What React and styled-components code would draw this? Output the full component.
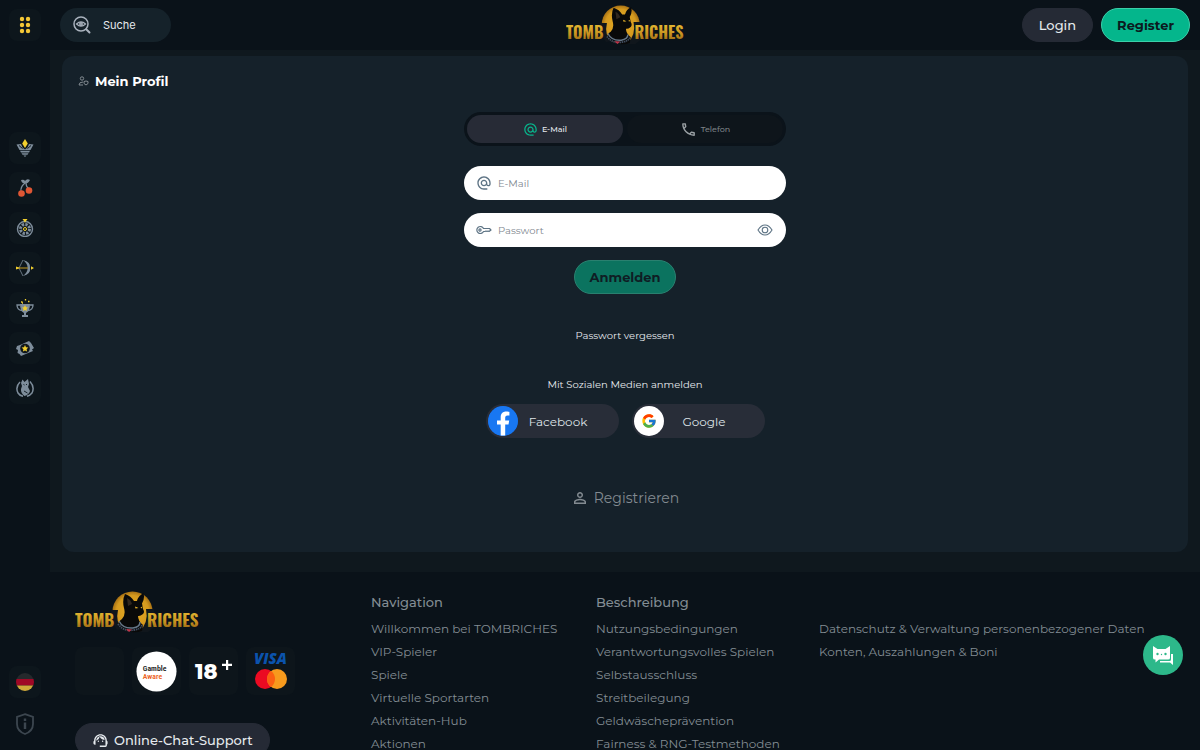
import React from "react";
import styled, { createGlobalStyle } from "styled-components";
import { MdAlternateEmail, MdOutlineLocalPhone, MdPersonOutline, MdSupportAgent } from "react-icons/md";
import { FcGoogle } from "react-icons/fc";

const GlobalStyle = createGlobalStyle`
  * { box-sizing: border-box; }
  body {
    margin: 0;
    background: #0a1219;
    color: #e6eaee;
    font-family: Montserrat, Inter, "Open Sans", sans-serif;
  }
  button, input { font-family: inherit; }
  button { cursor: pointer; border: 0; padding: 0; color: inherit; background: none; }
  a { color: inherit; text-decoration: none; }
  ul { list-style: none; margin: 0; padding: 0; }
`;

const Shell = styled.div`
  display: flex;
  height: 100vh;
  overflow: hidden;
`;

const Sidebar = styled.aside`
  flex: 0 0 50px;
  display: flex;
  flex-direction: column;
  align-items: center;
  padding: 9px 0 10px;
  background: #0a1219;
`;

const SideGroup = styled.nav`
  display: flex;
  flex-direction: column;
  gap: ${(p) => p.$gap || 8}px;
  margin-top: ${(p) => (p.$end ? "auto" : "91px")};
`;

const Tile = styled.button`
  width: 32px;
  height: 32px;
  border-radius: 8px;
  display: grid;
  place-items: center;
  background: ${(p) => (p.$plain ? "none" : "#0d161c")};
`;

const Page = styled.div`
  flex: 1;
  min-width: 0;
  display: flex;
  flex-direction: column;
`;

const Header = styled.header`
  flex: 0 0 50px;
  display: grid;
  grid-template-columns: 1fr auto 1fr;
  align-items: center;
  padding: 0 10px;
`;

const SearchBox = styled.label`
  display: flex;
  align-items: center;
  gap: 12px;
  width: 111px;
  height: 34px;
  padding-left: 13px;
  border-radius: 17px;
  background: #15222a;
`;

const SearchInput = styled.input`
  width: 56px;
  border: 0;
  padding: 0;
  outline: 0;
  background: none;
  color: #e6eaee;
  font-family: Inter, Roboto, sans-serif;
  font-size: 11px;
  &::placeholder { color: #e6eaee; opacity: 1; }
`;

const HeaderActions = styled.div`
  display: flex;
  justify-content: flex-end;
  gap: 8px;
`;

const Pill = styled.button`
  height: 34px;
  padding: 0 ${(p) => (p.$accent ? 15 : 16)}px;
  border-radius: 17px;
  font-size: 13px;
  font-weight: ${(p) => (p.$accent ? 700 : 500)};
  color: ${(p) => (p.$accent ? "#0b1a20" : "#e6eaee")};
  background: ${(p) => (p.$accent ? "#04b68c" : "#252a35")};
  border: 1px solid ${(p) => (p.$accent ? "#3bcfa9" : "#252a35")};
  opacity: ${(p) => (p.$dim ? 0.55 : 1)};
`;

const Scroller = styled.div`
  flex: 1;
  min-height: 0;
  overflow: hidden auto;
  scrollbar-width: none;
`;

const Main = styled.main`
  padding: 6px 12px 20px;
  background: #0f181e;
`;

const Panel = styled.section`
  padding: 17px 16px 44px;
  border-radius: 12px;
  background: #15212a;
`;

const PanelTitle = styled.h1`
  display: flex;
  align-items: center;
  gap: 6px;
  margin: 0 0 23px;
  font-size: 13px;
  line-height: 16px;
  font-weight: 700;
  color: #fff;
`;

const Form = styled.form`
  display: flex;
  flex-direction: column;
  align-items: center;
  width: 322px;
  max-width: 100%;
  margin: 0 auto;
`;

const Tabs = styled.div`
  display: grid;
  grid-template-columns: 1fr 1fr;
  gap: 4px;
  width: 100%;
  height: 34px;
  margin-bottom: 20px;
  padding: 3px;
  border-radius: 17px;
  background: #0b131a;
`;

const Tab = styled.button`
  display: flex;
  align-items: center;
  justify-content: center;
  gap: 4px;
  border-radius: 14px;
  font-size: 8px;
  font-weight: 500;
  color: ${(p) => (p.$active ? "#e6eaee" : "#7d8388")};
  background: ${(p) => (p.$active ? "#272b36" : "#0e151b")};
  svg { color: ${(p) => (p.$active ? "#08b48b" : "#9aa0a4")}; }
`;

const Field = styled.label`
  display: flex;
  align-items: center;
  gap: 6px;
  width: 100%;
  height: 34px;
  margin-bottom: 13px;
  padding: 0 13px 0 12px;
  border-radius: 17px;
  background: #fff;
  color: #5d7384;
`;

const FieldInput = styled.input`
  flex: 1;
  min-width: 0;
  padding: 0;
  border: 0;
  outline: 0;
  background: none;
  font-size: 10px;
  color: #15212a;
  &::placeholder { color: #7f8890; opacity: 1; }
`;

const IconButton = styled.button`
  display: grid;
  place-items: center;
`;

const SmallLink = styled.a`
  margin-top: 34px;
  font-size: 10px;
  line-height: 16px;
`;

const SmallText = styled.p`
  margin: 33px 0 11px;
  font-size: 10px;
  line-height: 16px;
`;

const SocialRow = styled.div`
  display: flex;
  gap: 13px;
`;

const SocialButton = styled.button`
  display: flex;
  align-items: center;
  width: 133px;
  height: 34px;
  padding: 0 20px 0 2px;
  border-radius: 17px;
  font-size: 12px;
  color: #dfe4e8;
  background: #282d38;
`;

const SocialLabel = styled.span`
  flex: 1;
  text-align: center;
`;

const SocialIcon = styled.span`
  display: grid;
  place-items: center;
  width: 30px;
  height: 30px;
  border-radius: 50%;
  background: ${(p) => p.$bg};
`;

const RegisterLink = styled.a`
  display: flex;
  align-items: center;
  gap: 5px;
  margin-top: 50px;
  font-size: 14px;
  line-height: 20px;
  color: #838b91;
`;

const Footer = styled.footer`
  display: grid;
  grid-template-columns: minmax(220px, 296fr) 225fr 223fr 356fr;
  padding: 19px 25px 60px;
  background: #0a1219;
`;

const Brand = styled.div`
  display: flex;
  flex-direction: column;
  align-items: flex-start;
`;

const Badges = styled.div`
  display: flex;
  gap: 8px;
  margin: 14px 0 28px;
`;

const Badge = styled.div`
  display: grid;
  place-items: center;
  width: 49px;
  height: 48px;
  border-radius: 8px;
  background: #0d151b;
`;

const SupportButton = styled(Pill)`
  display: flex;
  align-items: center;
  gap: 5px;
`;

const LinkColumn = styled.div`
  font-size: 12px;
  color: #838d94;
`;

const ColumnTitle = styled.h2`
  margin: 0 0 6px;
  min-height: 22px;
  font-size: 13px;
  line-height: 22px;
  font-weight: 500;
`;

const ColumnLink = styled.a`
  display: block;
  line-height: 19px;
  margin-bottom: 4px;
  white-space: nowrap;
`;

const ChatButton = styled.button`
  position: fixed;
  right: 17px;
  bottom: 75px;
  width: 40px;
  height: 40px;
  border-radius: 50%;
  display: grid;
  place-items: center;
  background: #2db88a;
`;

function Logo({ width, id }) {
  const font = {
    fontFamily: 'Oswald, "Bebas Neue", "Roboto Condensed", "Liberation Sans", sans-serif',
    fontWeight: 700,
    fontSize: 17,
  };
  return (
    <svg width={width} viewBox="0 0 124 42" role="img" aria-label="Tombriches">
      <defs>
        <linearGradient id={id + "g"} x1="0" y1="0" x2="0" y2="1">
          <stop offset="0.1" stopColor="#e9be35" />
          <stop offset="0.6" stopColor="#c58f1f" />
          <stop offset="1" stopColor="#84540f" />
        </linearGradient>
        <radialGradient id={id + "c"}>
          <stop offset="0" stopColor="#e9ac22" />
          <stop offset="0.8" stopColor="#d59a1f" />
          <stop offset="1" stopColor="#a87114" />
        </radialGradient>
        <clipPath id={id + "p"}><path d="M0 0H124V29Q92 40 72 40H40L0 26Z" /></clipPath>
      </defs>
      <circle cx="57.500" cy="20.500" r="20" fill={`url(#${id}c)`} clipPath={`url(#${id}p)`} />
      <path d="M36 19H43Q40 32 48 38L42 39Q36 30 36 19ZM71 18H79V36L73 41H64Q74 32 71 18Z" fill="#10161c" />
      <text x="0" y="36" fill={`url(#${id}g)`} style={font}>TOMB</text>
      <text x="72" y="36" fill={`url(#${id}g)`} style={font}>RICHES</text>
      <path d="M50 3Q56 5 59 10L62 10Q63 5 68.500 2Q70 8 67 12.500Q67.500 15 68 18Q70 21 68 23Q65 25.500 63 25Q63 30 68 34L67 40Q56 44 44 36Q42 31 47 28Q51 24 49 17Q47 9 50 3Z" fill="#090909" />
      <path d="M52 7Q56 9 57 13L53 15Z" fill="#30271f" />
      <path d="M60 15.500L63.500 17L60.500 17.500ZM65.500 16.500L67.500 15.500L66.500 17.500Z" fill="#f2bc2d" />
      <path d="M44 30Q48 38 58 37Q65 36 65 31" fill="none" stroke="#667788" strokeWidth="1.500" />
      <path d="M43 33Q49 41 59 39Q66 38 67 34" fill="none" stroke="#414e61" strokeWidth="1.800" strokeDasharray="1.500 0.700" />
      <path d="M51 38L54 41L57 38.500Z" fill="#c23348" />
    </svg>
  );
}

const DotsIcon = () => (
  <svg width="14" height="18" viewBox="0 0 14 18" fill="#f3c736">
    {[3, 9, 15].map((y) => [4, 10].map((x) => <circle key={x + "-" + y} cx={x} cy={y} r="2.200" />))}
  </svg>
);

const SearchEyeIcon = () => (
  <svg width="18" height="18" viewBox="0 0 18 18" fill="none" stroke="#a9b2bd" strokeWidth="1.500" strokeLinecap="round">
    <circle cx="8" cy="8" r="7" />
    <path d="M13.200 13.200L16.500 16.500" strokeWidth="2" />
    <path d="M3.500 8Q8 3.600 12.500 8Q8 12.400 3.500 8Z" strokeWidth="1.200" />
    <circle cx="8" cy="8" r="1.200" />
  </svg>
);

const S = "#7e8d9b";
const Y = "#f1cf2e";

const sideIcons = [
  ["Lotus", <g key="a">
    <path d="M9 0L11.800 4.500L9 9L6.200 4.500Z" fill={Y} />
    <path d="M0.500 5.500L5 5L6.500 8.500L9 10.500L11.500 8.500L13 5L17.500 5.500L14.500 11H3.500Z" fill={S} />
    <path d="M3 6.500L6.500 9.500M15 6.500L11.500 9.500" stroke="#101a20" />
    <path d="M4 11.800H14L13 13.500H5ZM5.500 14.300H12.500L11.500 15.800H6.500ZM7.500 16.400H10.500L9 18Z" fill={S} />
  </g>],
  ["Spielautomaten", <g key="a">
    <path d="M9 4Q4 8 5 13M10 4Q10 8 13 10" fill="none" stroke={S} strokeWidth="1.200" />
    <path d="M5 1Q8 0 9 2Q11-1 14 1Q12 5 8.500 4.500Q5.500 4 5 1Z" fill={S} />
    <circle cx="5.500" cy="14.500" r="3.300" fill="#df5634" />
    <circle cx="13" cy="11.500" r="3.300" fill="#df5634" />
  </g>],
  ["Roulette", <g key="a">
    <circle cx="9" cy="10" r="7.500" fill="none" stroke={S} strokeWidth="1.400" />
    <circle cx="9" cy="10" r="4.500" fill="none" stroke={S} strokeWidth="3" strokeDasharray="2.300 1.200" />
    <circle cx="9" cy="10" r="1.500" fill="none" stroke={Y} />
    <path d="M6.500 0H11.500L9 3.500Z" fill={Y} />
  </g>],
  ["Sport", <g key="a">
    <path d="M7 1Q15 3 14 9Q15 15 7 17Q12 13 11.500 9Q12 5 7 1Z" fill={S} />
    <path d="M7 1L3 9L7 17" fill="none" stroke={S} strokeWidth="0.800" />
    <path d="M1 9H12" stroke="#a7861f" strokeWidth="1.200" />
    <path d="M0 7.500L4 9L0 10.500ZM15 7.300L18 9L15 10.700Z" fill={Y} />
  </g>],
  ["Turniere", <g key="a">
    <path d="M4 5H14Q14 12 10 14V16H12V18H6V16H8V14Q4 12 4 5Z" fill={S} />
    <path d="M4 6H1Q1 11 6 11.500M14 6H17Q17 11 12 11.500" fill="none" stroke={S} strokeWidth="1.300" />
    <path d="M9 6L10 8.200L12 8.500L10.500 10L11 12L9 11L7 12L7.500 10L6 8.500L8 8.200Z" fill={Y} />
    <path d="M5 3H6.500M9.500 0V1.500M12 2.500H13.500M6 4H7" stroke={Y} strokeWidth="1.300" />
  </g>],
  ["Aktionen", <g key="a">
    <path d="M1 7L4 6L13 2L15 4L18 9L16 10.500L17 12L5 17L3.500 15L1.500 14L2 11L0 10Z" fill={S} />
    <circle cx="9" cy="9.500" r="4.800" fill="#10171c" />
    <path d="M9 6L10 8.300L12.300 8.600L10.600 10.200L11.100 12.600L9 11.400L6.900 12.600L7.400 10.200L5.700 8.600L8 8.300Z" fill={Y} />
  </g>],
  ["VIP-Klub", <g key="a">
    <path d="M4 3Q-1 8 2 14Q3.500 16.500 7 17.300M14 2.500Q19 8 16 14Q14 16.500 11 17.300" fill="none" stroke={S} strokeWidth="1.500" />
    <path d="M5 4L6.500 0.500L8.500 3L12 0L13 5L12 8L14 12Q13 15.500 8.500 17Q4.500 14 5 10L6 7Z" fill={S} />
    <path d="M7.500 5.500L8.500 6M11 5L10 6M8 12L11.500 14" stroke="#17232b" />
  </g>],
];

const ProfileIcon = () => (
  <svg width="11" height="10" viewBox="0 0 11 10" fill="none" stroke="#838b91">
    <circle cx="4" cy="2.500" r="1.700" />
    <path d="M5 6Q1 6 1 9H5" />
    <path d="M6 5.500L8 5L10 5.500V7.500L8 9L6 7.500Z" />
  </svg>
);

const KeyIcon = () => (
  <svg width="16" height="16" viewBox="0 0 16 16" fill="none" stroke="#5d7384" strokeWidth="1.200" strokeLinejoin="round">
    <path d="M7.500 6.500A3.500 3.500 0 1 0 7.500 9.500L9 9.500L10 9L11 9.500L12 9L13 9.500L15 8L13.500 6.500Z" />
    <circle cx="4" cy="8" r="1.100" />
  </svg>
);

const EyeIcon = () => (
  <svg width="16" height="12" viewBox="0 0 16 12" fill="none" stroke="#5d7384" strokeWidth="1.100">
    <path d="M1 6Q4 1 8 1Q12 1 15 6Q12 11 8 11Q4 11 1 6Z" />
    <circle cx="8" cy="6" r="2.800" />
  </svg>
);

const FacebookIcon = () => (
  <svg width="30" height="30" viewBox="0 0 30 30">
    <circle cx="15" cy="15" r="14.500" fill="#1877f2" />
    <path d="M12.700 29.500V18.500H9V14.500H12.700V11.400C12.700 7.700 14.900 5.600 18.200 5.600C19.800 5.600 21.400 5.900 21.400 5.900V9.500H19.500C17.700 9.500 17.200 10.600 17.200 11.700V14.500H21.200L20.500 18.500H17.200V29.500Z" fill="#fff" />
  </svg>
);

const FlagIcon = () => (
  <svg width="18" height="18" viewBox="0 0 18 18">
    <clipPath id="flag"><circle cx="9" cy="9" r="9" /></clipPath>
    <g clipPath="url(#flag)">
      <path d="M0 0H18V6H0Z" fill="#25292c" />
      <path d="M0 6H18V12.500H0Z" fill="#9f0826" />
      <path d="M0 12.500H18V18H0Z" fill="#cfa93a" />
    </g>
  </svg>
);

const ShieldIcon = () => (
  <svg width="18" height="22" viewBox="0 0 18 22" fill="none" stroke="#3c464f" strokeWidth="1.800">
    <path d="M9 1.200L17 4V11Q17 18 9 21Q1 18 1 11V4Z" />
    <path d="M9 9.500V16" strokeWidth="2.400" />
    <path d="M9 5.500V8" strokeWidth="2.400" />
  </svg>
);

const CatChatIcon = () => (
  <svg width="20" height="20" viewBox="0 0 20 20">
    <path d="M0 1L4.500 4H12.500L17 1V13Q17 14.500 15 14.500H6L2.500 17.500V14.500H2Q0 14.500 0 13Z" fill="#fff" />
    <path d="M18 9H20V20L17 17.500H7V16H16.500Q18 16 18 14.500Z" fill="#fff" />
    <circle cx="4.500" cy="9" r="1.200" fill="#2db88a" />
    <circle cx="12.500" cy="9" r="1.200" fill="#2db88a" />
    <circle cx="8.500" cy="9.500" r="0.700" fill="#2db88a" />
  </svg>
);

const GambleAware = () => (
  <svg width="41" height="41" viewBox="0 0 42 42" fontFamily='"Roboto Condensed", "Open Sans", sans-serif' fontSize="8" fontWeight="600">
    <circle cx="21" cy="21" r="20.500" fill="#fff" />
    <text x="7" y="20" fill="#222">Gamble</text>
    <text x="7" y="29" fill="#ec6425">Aware</text>
  </svg>
);

const AgeMark = () => (
  <svg width="40" height="30" viewBox="0 0 40 30" fill="#fff" fontFamily="Montserrat, Inter, sans-serif" fontWeight="800">
    <text x="1" y="23" fontSize="21">18</text>
    <path d="M32 4H34.200V7.800H38V10H34.200V14H32V10H28V7.800H32Z" />
  </svg>
);

const Cards = () => (
  <svg width="40" height="40" viewBox="0 0 40 40">
    <text x="3" y="13" fill="#0b53ad" fontFamily='"Open Sans", sans-serif' fontStyle="italic" fontWeight="800" fontSize="15">VISA</text>
    <circle cx="14" cy="28" r="10" fill="#eb0a22" />
    <circle cx="26" cy="28" r="10" fill="#f79a1d" />
    <path d="M20 20A10 10 0 0 1 20 36A10 10 0 0 1 20 20Z" fill="#fb5f12" />
  </svg>
);

const columns = [
  ["Navigation", ["Willkommen bei TOMBRICHES", "VIP-Spieler", "Spiele", "Virtuelle Sportarten", "Aktivitäten-Hub", "Aktionen"]],
  ["Beschreibung", ["Nutzungsbedingungen", "Verantwortungsvolles Spielen", "Selbstausschluss", "Streitbeilegung", "Geldwäscheprävention", "Fairness & RNG-Testmethoden"]],
  ["", ["Datenschutz & Verwaltung personenbezogener Daten", "Konten, Auszahlungen & Boni"]],
];

export default function App() {
  return (
    <Shell>
      <GlobalStyle />
      <Sidebar>
        <Tile aria-label="Menü"><DotsIcon /></Tile>
        <SideGroup>
          {sideIcons.map(([label, art]) => (
            <Tile key={label} aria-label={label}>
              <svg width="18" height="18" viewBox="0 0 18 18">{art}</svg>
            </Tile>
          ))}
        </SideGroup>
        <SideGroup $end $gap={10}>
          <Tile aria-label="Sprache"><FlagIcon /></Tile>
          <Tile $plain aria-label="Info"><ShieldIcon /></Tile>
        </SideGroup>
      </Sidebar>
      <Page>
        <Header>
          <SearchBox>
            <SearchEyeIcon />
            <SearchInput type="text" placeholder="Suche" aria-label="Suche" />
          </SearchBox>
          <Logo width={118} id="top" />
          <HeaderActions>
            <Pill>Login</Pill>
            <Pill $accent>Register</Pill>
          </HeaderActions>
        </Header>
        <Scroller>
          <Main>
            <Panel>
              <PanelTitle><ProfileIcon />Mein Profil</PanelTitle>
              <Form onSubmit={(e) => e.preventDefault()}>
                <Tabs>
                  <Tab type="button" $active><MdAlternateEmail size={15} />E-Mail</Tab>
                  <Tab type="button"><MdOutlineLocalPhone size={17} />Telefon</Tab>
                </Tabs>
                <Field>
                  <MdAlternateEmail size={16} />
                  <FieldInput type="email" placeholder="E-Mail" aria-label="E-Mail" />
                </Field>
                <Field>
                  <KeyIcon />
                  <FieldInput type="password" placeholder="Passwort" aria-label="Passwort" />
                  <IconButton type="button" aria-label="Passwort anzeigen"><EyeIcon /></IconButton>
                </Field>
                <Pill type="submit" $accent $dim>Anmelden</Pill>
                <SmallLink href="#passwort">Passwort vergessen</SmallLink>
                <SmallText>Mit Sozialen Medien anmelden</SmallText>
                <SocialRow>
                  <SocialButton type="button">
                    <SocialIcon $bg="#1877f2"><FacebookIcon /></SocialIcon>
                    <SocialLabel>Facebook</SocialLabel>
                  </SocialButton>
                  <SocialButton type="button">
                    <SocialIcon $bg="#fff"><FcGoogle size={16} /></SocialIcon>
                    <SocialLabel>Google</SocialLabel>
                  </SocialButton>
                </SocialRow>
                <RegisterLink href="#registrieren"><MdPersonOutline size={18} />Registrieren</RegisterLink>
              </Form>
            </Panel>
          </Main>
          <Footer>
            <Brand>
              <Logo width={124} id="foot" />
              <Badges>
                <Badge />
                <Badge><GambleAware /></Badge>
                <Badge><AgeMark /></Badge>
                <Badge><Cards /></Badge>
              </Badges>
              <SupportButton><MdSupportAgent size={17} />Online-Chat-Support</SupportButton>
            </Brand>
            {columns.map(([title, links]) => (
              <LinkColumn key={title}>
                <ColumnTitle as={title ? "h2" : "div"}>{title}</ColumnTitle>
                <ul>
                  {links.map((text) => (
                    <li key={text}><ColumnLink href="#info">{text}</ColumnLink></li>
                  ))}
                </ul>
              </LinkColumn>
            ))}
          </Footer>
        </Scroller>
      </Page>
      <ChatButton aria-label="Chat"><CatChatIcon /></ChatButton>
    </Shell>
  );
}
